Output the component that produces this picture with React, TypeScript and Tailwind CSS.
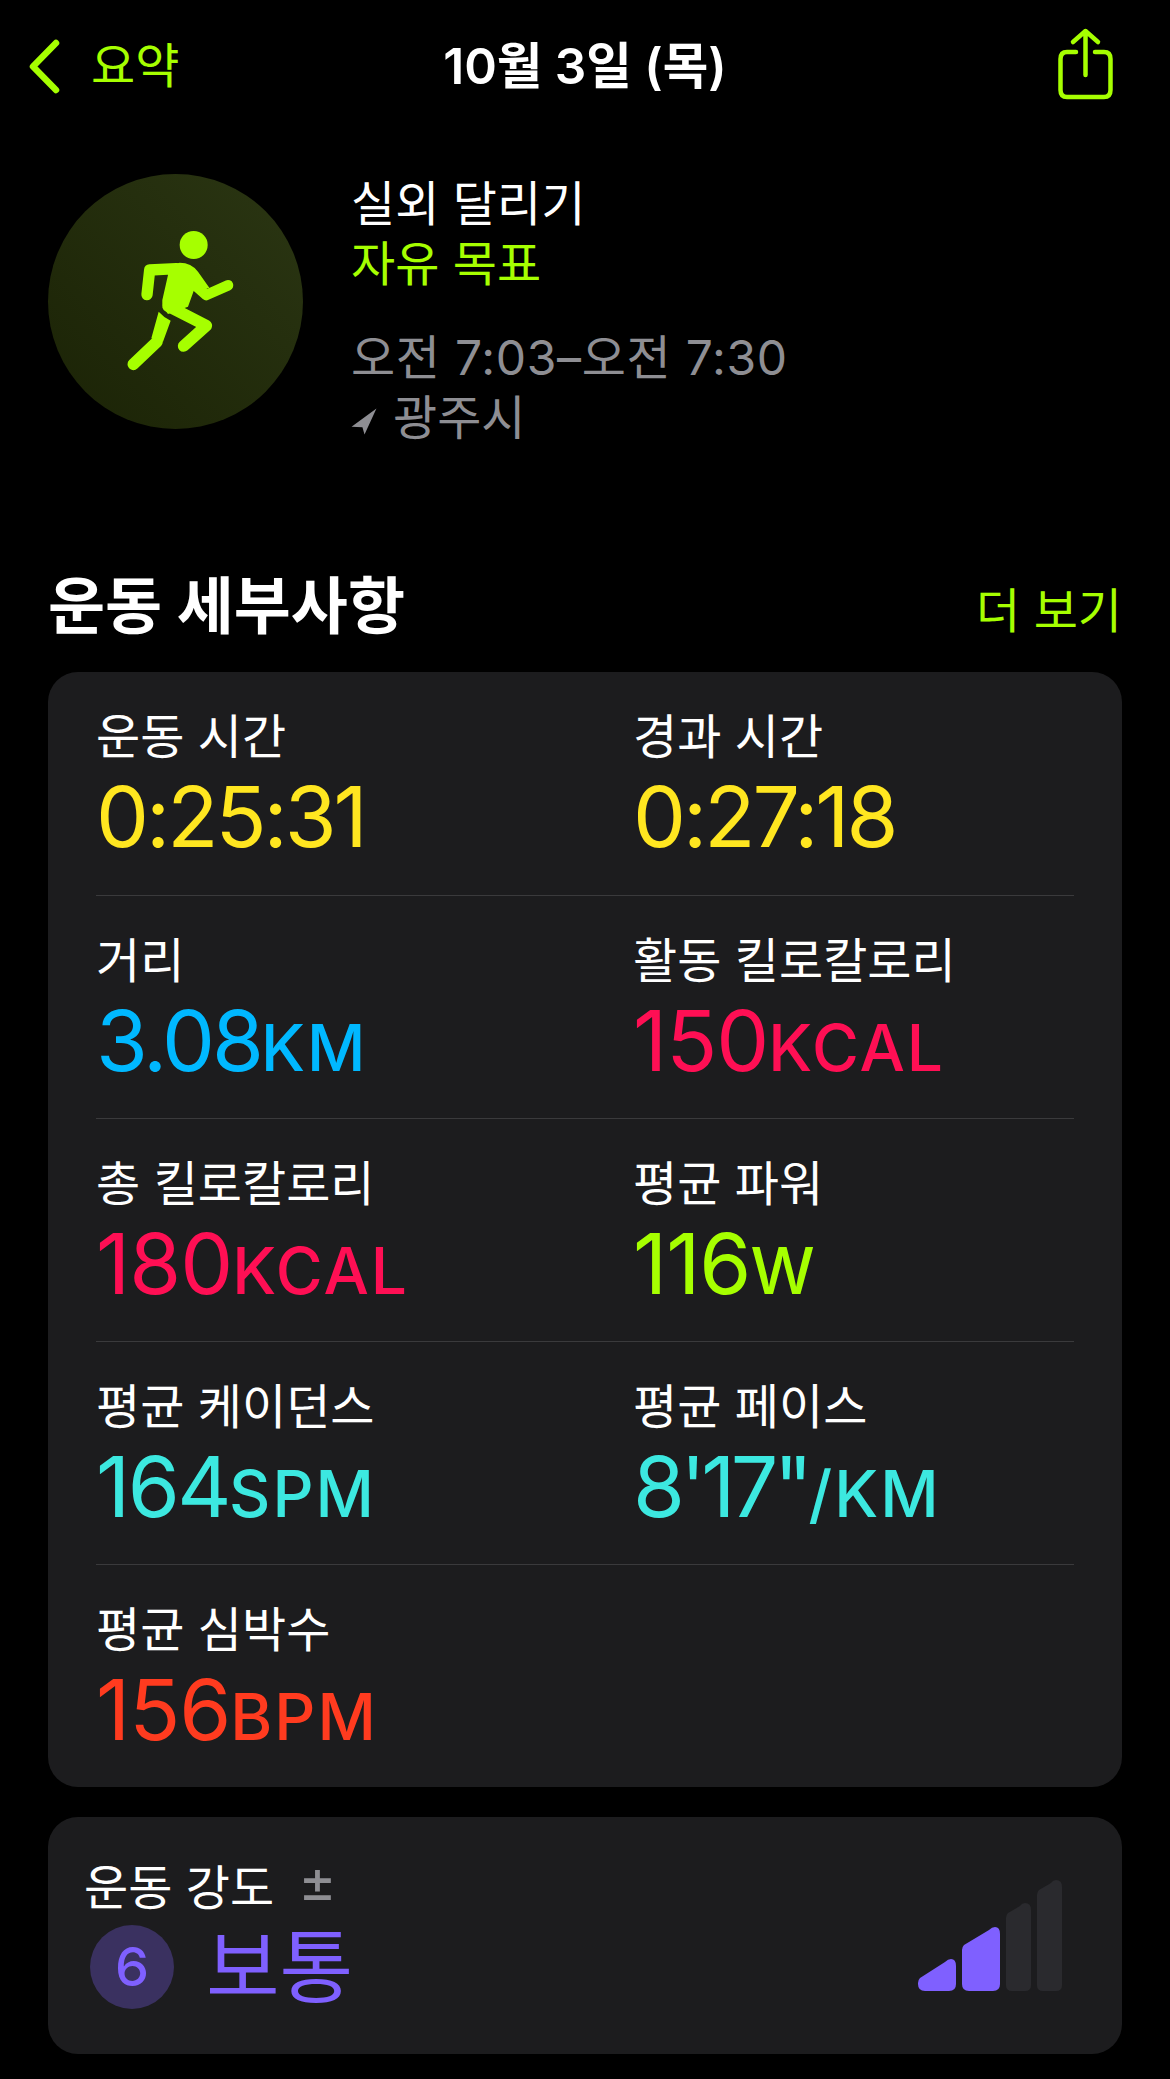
import React from "react";

const FONT = "font-['Inter','Noto_Sans_CJK_KR',sans-serif]";

const metrics = [
  [
    { label: "운동 시간", value: "0:25:31", unit: "", color: "text-[#ffe620]", track: "tracking-[-3px]" },
    { label: "경과 시간", value: "0:27:18", unit: "", color: "text-[#ffe620]", track: "tracking-[-3px]" },
  ],
  [
    { label: "거리", value: "3.08", unit: "KM", color: "text-[#00b8ff]", track: "tracking-[-3px]" },
    { label: "활동 킬로칼로리", value: "150", unit: "KCAL", color: "text-[#ff0f54]", track: "tracking-[-1px]" },
  ],
  [
    { label: "총 킬로칼로리", value: "180", unit: "KCAL", color: "text-[#ff0f54]", track: "tracking-[-1px]" },
    { label: "평균 파워", value: "116", unit: "W", color: "text-[#a6ff00]", track: "tracking-[-1px]" },
  ],
  [
    { label: "평균 케이던스", value: "164", unit: "SPM", color: "text-[#3ce8e0]", track: "tracking-[-2.5px]" },
    { label: "평균 페이스", value: "8'17\"", unit: "/KM", color: "text-[#3ce8e0]", track: "tracking-[-4.5px]" },
  ],
  [{ label: "평균 심박수", value: "156", unit: "BPM", color: "text-[#ff3b1f]", track: "tracking-[-1px]" }],
];

type MetricProps = { label: string; value: string; unit: string; color: string; track: string };

function Metric({ label, value, unit, color, track }: MetricProps) {
  return (
    <div>
      <div className="text-[48px] leading-[56px] text-white">{label}</div>
      <div className={`mt-[12px] h-[80px] text-[84px] leading-[80px] ${track} ${color}`}>
        {value}
        <span className="text-[64px] font-medium tracking-[2px]">{unit}</span>
      </div>
    </div>
  );
}

function Runner() {
  return (
    <svg viewBox="85 42 765 765" className="h-full w-full" fill="#a6ff00" stroke="none">
      <circle cx="522" cy="255" r="42" />
      <path d="M382 404 L390 330 L470 326" fill="none" stroke="#a6ff00" strokeWidth="34" strokeLinecap="round" strokeLinejoin="round" />
      <path d="M445 345 L440 320 L480 308 Q515 308 535 335 L570 385 L525 385 L505 440 L445 462 Q425 440 428 420 Z" />
      <path d="M520 370 L560 405 L625 376" fill="none" stroke="#a6ff00" strokeWidth="32" strokeLinecap="round" strokeLinejoin="round" />
      <path d="M445 438 L560 497 L492 558" fill="none" stroke="#a6ff00" strokeWidth="35" strokeLinecap="round" strokeLinejoin="round" />
      <path d="M417 455 Q432 472 453 482 L430 545 L395 535 Z" />
      <path d="M341 613 L412 545" fill="none" stroke="#a6ff00" strokeWidth="35" strokeLinecap="round" />
    </svg>
  );
}

function IntensityBars() {
  return (
    <svg viewBox="0 0 144 111" className="h-[111px] w-[144px]">
      <path d="M0 104 L0 103 Q0 100 2 98 L27 82 Q30 79 33 79 Q38 79 38 86 L38 104 Q38 111 31 111 L7 111 Q0 111 0 104 Z" fill="#7f60ff" />
      <path d="M44 104 L44 70 Q44 67 46 65 L71 50 Q74 47 77 47 Q82 47 82 54 L82 104 Q82 111 75 111 L51 111 Q44 111 44 104 Z" fill="#7f60ff" />
      <path d="M88 105 L88 38 Q88 35 90 33 L102 26 Q104 23 107 23 Q113 23 113 30 L113 105 Q113 111 107 111 L94 111 Q88 111 88 105 Z" fill="#2a2a2e" />
      <path d="M119 105 L119 15 Q119 12 121 10 L133 3 Q135 0 138 0 Q144 0 144 7 L144 105 Q144 111 138 111 L125 111 Q119 111 119 105 Z" fill="#2a2a2e" />
    </svg>
  );
}

export default function App() {
  return (
    <div className={`min-h-[2079px] bg-black pb-[25px] ${FONT}`}>
      <header className="relative flex h-[132px] items-center justify-between pl-[29px] pr-[57px]">
        <div className="flex items-center gap-[31px]">
          <svg viewBox="0 0 31 55" className="h-[55px] w-[31px]" fill="none" stroke="#a6ff00" strokeWidth="6.5" strokeLinecap="round" strokeLinejoin="round">
            <path d="M27 4 L4 27.5 L27 51" />
          </svg>
          <span className="text-[48px] leading-none text-[#a6ff00]">요약</span>
        </div>
        <span className="absolute left-0 right-0 text-center text-[49.5px] font-semibold text-white">10월 3일 (목)</span>
        <svg viewBox="0 0 55 72" className="mt-[-4px] h-[72px] w-[55px]" fill="none" stroke="#a6ff00" strokeWidth="4.5" strokeLinecap="round" strokeLinejoin="round">
          <path d="M18 24 H9 Q2.5 24 2.5 31 V62 Q2.5 69 9 69 H46 Q52.5 69 52.5 62 V31 Q52.5 24 46 24 H37" />
          <path d="M27.5 47 V3 M15 14 L27.5 3 L40 14" />
        </svg>
      </header>

      <section className="mt-[42px] flex items-start pl-[48px]">
        <div className="h-[255px] w-[255px] rounded-full bg-gradient-to-tr from-[#1b2306] to-[#2b3613]">
          <Runner />
        </div>
        <div className="ml-[48px] text-[48px] leading-[60px]">
          <div className="text-white">실외 달리기</div>
          <div className="text-[#a6ff00]">자유 목표</div>
          <div className="mt-[34px] tracking-[0.7px] text-[#8e8e93]">오전 7:03–오전 7:30</div>
          <div className="flex items-center gap-[16px] text-[#8e8e93]">
            <svg viewBox="0 0 25 26" className="mt-[6px] h-[27px] w-[26px]" fill="#8e8e93">
              <path d="M24.5 0.5 L0.5 18 L11 18.5 L13 25.5 Z" />
            </svg>
            광주시
          </div>
        </div>
      </section>

      <div className="mt-[121px] flex items-end justify-between px-[48px]">
        <h2 className="text-[62px] font-bold leading-[76px] text-white">운동 세부사항</h2>
        <span className="mb-[6px] text-[48px] leading-[56px] text-[#a6ff00]">더 보기</span>
      </div>

      <section className="mx-[48px] mt-[27px] rounded-[30px] bg-[#1c1c1e] px-[48px]">
        {metrics.map((row, i) => (
          <div key={i} className={`grid h-[223px] grid-cols-[537px_1fr] pt-[37px] ${i > 0 ? "border-t border-[#3a3a3c]" : ""}`}>
            {row.map((m) => (
              <Metric key={m.label} {...m} />
            ))}
          </div>
        ))}
      </section>

      <section className="mx-[48px] mt-[30px] flex h-[237px] items-center justify-between rounded-[30px] bg-[#1c1c1e] pl-[36px] pr-[60px]">
        <div>
          <div className="flex items-center gap-[24px] text-[48px] leading-[56px] text-white">
            운동 강도
            <span className="mt-[-14px] text-[58px] leading-[56px] text-[#8e8e93]">±</span>
          </div>
          <div className="mt-[6px] flex items-center gap-[32px] pl-[6px]">
            <div className="flex h-[84px] w-[84px] items-center justify-center rounded-full bg-[#3a3160] text-[54px] font-medium text-[#7f60ff]">6</div>
            <div className="text-[80px] leading-[90px] text-[#7f60ff]">보통</div>
          </div>
        </div>
        <IntensityBars />
      </section>
    </div>
  );
}
